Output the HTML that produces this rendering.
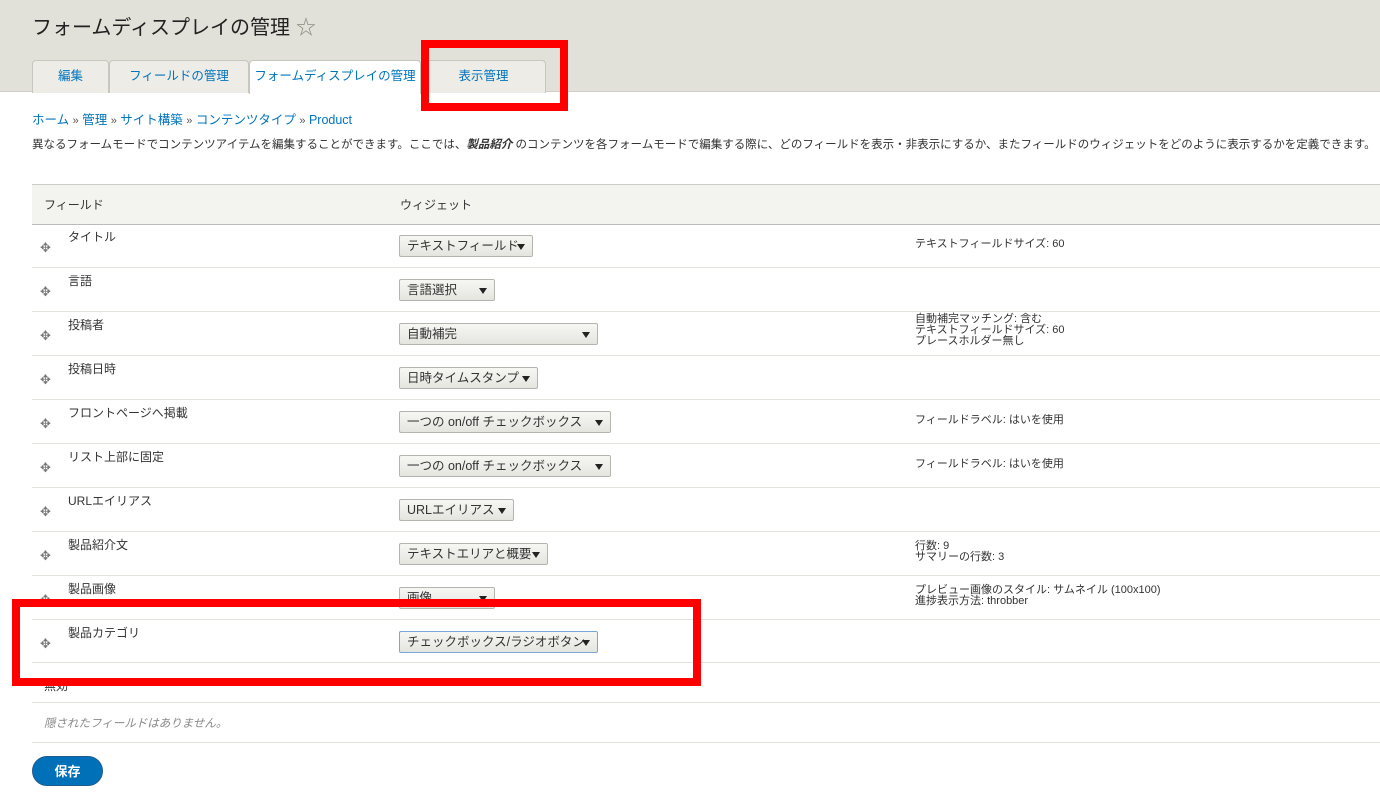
<!DOCTYPE html>
<html><head><meta charset="utf-8"><style>
*{box-sizing:border-box;margin:0;padding:0}
body{width:1380px;height:805px;background:#fff;font-family:"Liberation Sans","Noto Sans CJK JP",sans-serif;color:#333;position:relative;overflow:hidden;font-size:12px}
.hdr{position:absolute;left:0;top:0;width:1380px;height:92px;background:#e1e0d9;border-bottom:1px solid #cfcdc4}
h1{position:absolute;left:32px;top:11px;font-size:20px;font-weight:normal;color:#222}
h1 span{color:#8a8a7a;font-size:20px;margin-left:6px}
.tab{position:absolute;top:60px;height:33px;border:1px solid #c8c6bd;border-bottom:none;background:#edece6;border-radius:4px 4px 0 0;color:#0074bd;font-size:12.5px;text-align:center;line-height:30px}
.tab.a{background:#fff;height:34px}
.bc{position:absolute;left:32px;top:109px;font-size:12.5px;color:#0074bd}
.bc b{color:#555;font-weight:normal;font-size:11px}
.desc{position:absolute;left:32px;top:136px;font-size:11.5px;color:#333}
table{position:absolute;left:32px;top:184px;width:1348px;border-collapse:collapse}
th{height:40px;background:#f3f3ef;border-top:1px solid #ccc;border-bottom:1px solid #bbb;text-align:left;font-weight:normal;font-size:12px;padding-left:12px}
.row{position:absolute;left:32px;width:1348px;height:44px;border-bottom:1px solid #e3e3de}
.row .mv{position:absolute;left:8px;top:16px;color:#777;font-size:13px}
.row .nm{position:absolute;left:36px;top:4px;font-size:12px}
.sel{position:absolute;top:11px;height:22px;border:1px solid #b5b5b0;border-radius:2px;background:linear-gradient(#f6f6f3,#e5e5e0);font-size:12.5px;line-height:20px;padding-left:7px;color:#333}
.sel:after{content:"";position:absolute;right:7px;top:8px;border-left:4px solid transparent;border-right:4px solid transparent;border-top:6px solid #222}
.sum{position:absolute;left:883px;font-size:11px;line-height:11px;color:#333}
.rb{position:absolute;border:8px solid #f00}
.btn{position:absolute;left:32px;top:756px;width:71px;height:30px;border-radius:15px;background:#0071b8;color:#fff;font-weight:bold;font-size:13px;text-align:center;line-height:29px;border:1px solid #1e5c90}
</style></head><body>
<div class="hdr"></div>
<h1>フォームディスプレイの管理<span>☆</span></h1>
<div class="tab" style="left:32px;width:77px">編集</div>
<div class="tab" style="left:109px;width:140px">フィールドの管理</div>
<div class="tab a" style="left:249px;width:172px">フォームディスプレイの管理</div>
<div class="tab" style="left:421px;width:125px">表示管理</div>
<div class="bc">ホーム <b>»</b> 管理 <b>»</b> サイト構築 <b>»</b> コンテンツタイプ <b>»</b> Product</div>
<div class="desc">異なるフォームモードでコンテンツアイテムを編集することができます。ここでは、<b><i>製品紹介</i></b> のコンテンツを各フォームモードで編集する際に、どのフィールドを表示・非表示にするか、またフィールドのウィジェットをどのように表示するかを定義できます。</div>
<table><tr><th style="width:356px">フィールド</th><th>ウィジェット</th></tr></table>

<div class="row" style="top:224px"><span class="mv">✥</span><span class="nm">タイトル</span><div class="sel" style="left:367px;width:134px">テキストフィールド</div><div class="sum" style="top:15px">テキストフィールドサイズ: 60</div></div>
<div class="row" style="top:268px"><span class="mv">✥</span><span class="nm">言語</span><div class="sel" style="left:367px;width:96px">言語選択</div></div>
<div class="row" style="top:312px"><span class="mv">✥</span><span class="nm">投稿者</span><div class="sel" style="left:367px;width:199px">自動補完</div><div class="sum" style="top:2px">自動補完マッチング: 含む<br>テキストフィールドサイズ: 60<br>プレースホルダー無し</div></div>
<div class="row" style="top:356px"><span class="mv">✥</span><span class="nm">投稿日時</span><div class="sel" style="left:367px;width:139px">日時タイムスタンプ</div></div>
<div class="row" style="top:400px"><span class="mv">✥</span><span class="nm">フロントページへ掲載</span><div class="sel" style="left:367px;width:212px">一つの on/off チェックボックス</div><div class="sum" style="top:15px">フィールドラベル: はいを使用</div></div>
<div class="row" style="top:444px"><span class="mv">✥</span><span class="nm">リスト上部に固定</span><div class="sel" style="left:367px;width:212px">一つの on/off チェックボックス</div><div class="sum" style="top:15px">フィールドラベル: はいを使用</div></div>
<div class="row" style="top:488px"><span class="mv">✥</span><span class="nm">URLエイリアス</span><div class="sel" style="left:367px;width:115px">URLエイリアス</div></div>
<div class="row" style="top:532px"><span class="mv">✥</span><span class="nm">製品紹介文</span><div class="sel" style="left:367px;width:149px">テキストエリアと概要</div><div class="sum" style="top:9px">行数: 9<br>サマリーの行数: 3</div></div>
<div class="row" style="top:576px"><span class="mv">✥</span><span class="nm">製品画像</span><div class="sel" style="left:367px;width:96px">画像</div><div class="sum" style="top:9px">プレビュー画像のスタイル: サムネイル (100x100)<br>進捗表示方法: throbber</div></div>
<div class="row" style="top:620px;height:43px"><span class="mv">✥</span><span class="nm">製品カテゴリ</span><div class="sel" style="left:367px;width:199px;border-color:#7aa7d9">チェックボックス/ラジオボタン</div></div>
<div class="row" style="top:663px;height:40px"><span class="nm" style="left:12px;top:14px">無効</span></div>
<div class="row" style="top:703px;height:40px"><span class="nm" style="left:12px;top:12px;color:#888;font-style:italic;font-size:11.5px">隠されたフィールドはありません。</span></div>
<div class="btn">保存</div>
<div class="rb" style="left:421px;top:40px;width:147px;height:71px"></div>
<div class="rb" style="left:12px;top:599px;width:689px;height:87px"></div>
</body></html>
